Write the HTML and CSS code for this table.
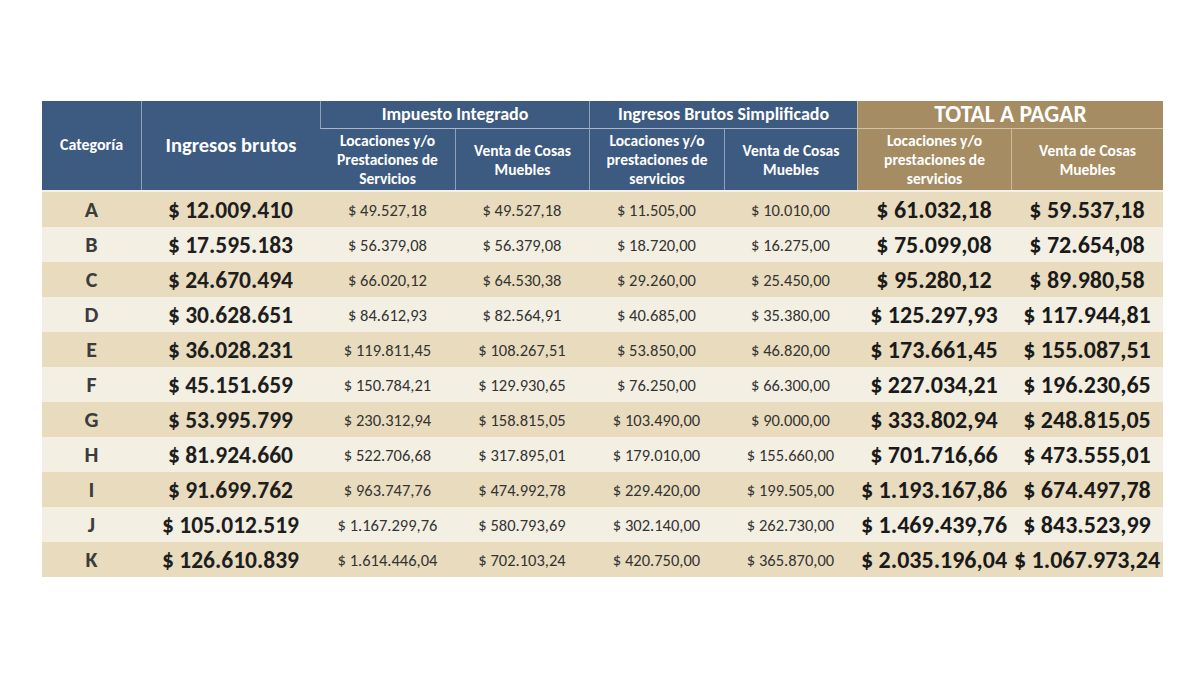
FILE: index.html
```html
<!DOCTYPE html>
<html lang="es">
<head>
<meta charset="utf-8">
<title>Monotributo</title>
<link rel="stylesheet" href="styles.css">
</head>
<body>
<table class="tabla">
  <colgroup>
    <col class="c-cat"><col class="c-ing"><col class="c-a"><col class="c-b"><col class="c-a"><col class="c-d"><col class="c-t1"><col class="c-t2">
  </colgroup>
  <thead>
    <tr class="h1">
      <th rowspan="2" class="blue cat-h">Categoría</th>
      <th rowspan="2" class="blue ing-h">Ingresos brutos</th>
      <th colspan="2" class="blue grp">Impuesto Integrado</th>
      <th colspan="2" class="blue grp">Ingresos Brutos Simplificado</th>
      <th colspan="2" class="gold grp total-h">TOTAL A PAGAR</th>
    </tr>
    <tr class="h2">
      <th class="blue sub">Locaciones y/o<br>Prestaciones de<br>Servicios</th>
      <th class="blue sub">Venta de Cosas<br>Muebles</th>
      <th class="blue sub">Locaciones y/o<br>prestaciones de<br>servicios</th>
      <th class="blue sub">Venta de Cosas<br>Muebles</th>
      <th class="gold sub">Locaciones y/o<br>prestaciones de<br>servicios</th>
      <th class="gold sub">Venta de Cosas<br>Muebles</th>
    </tr>
  </thead>
  <tbody>
    <tr class="dark"><td class="cat">A</td><td class="ing">$ 12.009.410</td><td class="sm">$ 49.527,18</td><td class="sm">$ 49.527,18</td><td class="sm">$ 11.505,00</td><td class="sm">$ 10.010,00</td><td class="tot">$ 61.032,18</td><td class="tot">$ 59.537,18</td></tr>
    <tr class="light"><td class="cat">B</td><td class="ing">$ 17.595.183</td><td class="sm">$ 56.379,08</td><td class="sm">$ 56.379,08</td><td class="sm">$ 18.720,00</td><td class="sm">$ 16.275,00</td><td class="tot">$ 75.099,08</td><td class="tot">$ 72.654,08</td></tr>
    <tr class="dark"><td class="cat">C</td><td class="ing">$ 24.670.494</td><td class="sm">$ 66.020,12</td><td class="sm">$ 64.530,38</td><td class="sm">$ 29.260,00</td><td class="sm">$ 25.450,00</td><td class="tot">$ 95.280,12</td><td class="tot">$ 89.980,58</td></tr>
    <tr class="light"><td class="cat">D</td><td class="ing">$ 30.628.651</td><td class="sm">$ 84.612,93</td><td class="sm">$ 82.564,91</td><td class="sm">$ 40.685,00</td><td class="sm">$ 35.380,00</td><td class="tot">$ 125.297,93</td><td class="tot">$ 117.944,81</td></tr>
    <tr class="dark"><td class="cat">E</td><td class="ing">$ 36.028.231</td><td class="sm">$ 119.811,45</td><td class="sm">$ 108.267,51</td><td class="sm">$ 53.850,00</td><td class="sm">$ 46.820,00</td><td class="tot">$ 173.661,45</td><td class="tot">$ 155.087,51</td></tr>
    <tr class="light"><td class="cat">F</td><td class="ing">$ 45.151.659</td><td class="sm">$ 150.784,21</td><td class="sm">$ 129.930,65</td><td class="sm">$ 76.250,00</td><td class="sm">$ 66.300,00</td><td class="tot">$ 227.034,21</td><td class="tot">$ 196.230,65</td></tr>
    <tr class="dark"><td class="cat">G</td><td class="ing">$ 53.995.799</td><td class="sm">$ 230.312,94</td><td class="sm">$ 158.815,05</td><td class="sm">$ 103.490,00</td><td class="sm">$ 90.000,00</td><td class="tot">$ 333.802,94</td><td class="tot">$ 248.815,05</td></tr>
    <tr class="light"><td class="cat">H</td><td class="ing">$ 81.924.660</td><td class="sm">$ 522.706,68</td><td class="sm">$ 317.895,01</td><td class="sm">$ 179.010,00</td><td class="sm">$ 155.660,00</td><td class="tot">$ 701.716,66</td><td class="tot">$ 473.555,01</td></tr>
    <tr class="dark"><td class="cat">I</td><td class="ing">$ 91.699.762</td><td class="sm">$ 963.747,76</td><td class="sm">$ 474.992,78</td><td class="sm">$ 229.420,00</td><td class="sm">$ 199.505,00</td><td class="tot">$ 1.193.167,86</td><td class="tot">$ 674.497,78</td></tr>
    <tr class="light"><td class="cat">J</td><td class="ing">$ 105.012.519</td><td class="sm">$ 1.167.299,76</td><td class="sm">$ 580.793,69</td><td class="sm">$ 302.140,00</td><td class="sm">$ 262.730,00</td><td class="tot">$ 1.469.439,76</td><td class="tot">$ 843.523,99</td></tr>
    <tr class="dark"><td class="cat">K</td><td class="ing">$ 126.610.839</td><td class="sm">$ 1.614.446,04</td><td class="sm">$ 702.103,24</td><td class="sm">$ 420.750,00</td><td class="sm">$ 365.870,00</td><td class="tot">$ 2.035.196,04</td><td class="tot">$ 1.067.973,24</td></tr>
  </tbody>
</table>
</body>
</html>
```
FILE: styles.css
```css
html, body {
  margin: 0;
  padding: 0;
  background: #ffffff;
}
body {
  font-family: Carlito, "Liberation Sans", sans-serif;
}
.tabla {
  margin: 101px 0 0 42px;
  border-collapse: separate;
  border-spacing: 0;
  table-layout: fixed;
  width: 1121px;
}
.c-cat { width: 99px; }
.c-ing { width: 179px; }
.c-a { width: 135px; }
.c-b { width: 134px; }
.c-d { width: 133px; }
.c-t1 { width: 154px; }
.c-t2 { width: 152px; }

th {
  color: #ffffff;
  font-weight: bold;
  text-align: center;
  padding: 0;
  line-height: 1.15;
  white-space: nowrap;
}
.blue { background: #3d5a80; }
.gold { background: #a58c62; }
th + th { border-left: 1px solid #8ea0ba; }
.gold { border-left-color: #cdbb98; }
.h2 th:first-child { border-left: none; }
.h2 .gold + .gold { border-left: 1px solid #cdbb98; }
.h1 th { height: 25px; }
.h1 .grp { border-bottom: 1px solid #a9b7c9; font-size: 18px; }
.h1 .gold.grp { border-bottom-color: #d3c3a3; }
.h1 .total-h { font-size: 23.5px; }
.h2 th { height: 61px; font-size: 15.5px; line-height: 19px; }
.cat-h { font-size: 16px; }
.ing-h { font-size: 20.5px; }

tbody td {
  text-align: center;
  padding: 0;
  height: 35px;
  color: #2a2a2a;
  white-space: nowrap;
}
tbody tr:first-child td { border-top: 2px solid #f4f1ea; }
.dark td { background: #e9dcbe; }
.light td { background: #f3efe2; }
.cat { font-weight: bold; font-size: 22px; color: #3c3c3c; }
.ing { font-weight: bold; font-size: 23.5px; color: #1e1e1e; }
.sm { font-size: 16.5px; color: #333333; }
.tot { font-weight: bold; font-size: 24px; color: #1a1a1a; }
```
